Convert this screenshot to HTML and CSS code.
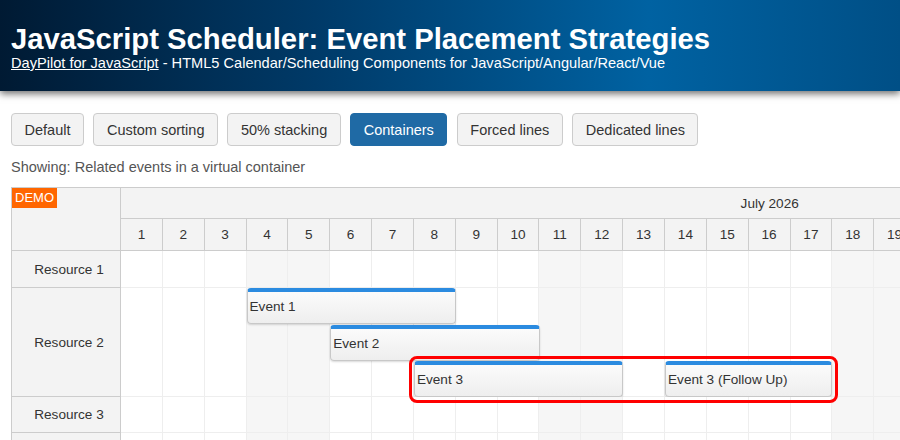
FILE: index.html
```html
<!DOCTYPE html>
<html>
<head>
<meta charset="utf-8">
<link rel="stylesheet" href="styles.css">
</head>
<body>
<div class="header">
  <h1 class="title">JavaScript Scheduler: Event Placement Strategies</h1>
  <div class="subtitle"><a class="link" href="#">DayPilot for JavaScript</a> - HTML5 Calendar/Scheduling Components for JavaScript/Angular/React/Vue</div>
</div>
<div class="main">
  <div class="toolbar">
    <button class="btn">Default</button>
    <button class="btn">Custom sorting</button>
    <button class="btn">50% stacking</button>
    <button class="btn active">Containers</button>
    <button class="btn">Forced lines</button>
    <button class="btn">Dedicated lines</button>
  </div>
  <div class="showing">Showing: Related events in a virtual container</div>
  <div class="scheduler">
    <div class="rowheaders">
      <div class="corner"><span class="demo">DEMO</span></div>
      <div class="rh rh1">Resource 1</div>
      <div class="rh rh2">Resource 2</div>
      <div class="rh rh3">Resource 3</div>
      <div class="rh rh4"></div>
    </div>
    <div class="timeline">
      <div class="month"><span class="month-label">July 2026</span></div>
      <div class="days">
        <div class="day">1</div><div class="day">2</div><div class="day">3</div><div class="day">4</div><div class="day">5</div><div class="day">6</div><div class="day">7</div><div class="day">8</div><div class="day">9</div><div class="day">10</div><div class="day">11</div><div class="day">12</div><div class="day">13</div><div class="day">14</div><div class="day">15</div><div class="day">16</div><div class="day">17</div><div class="day">18</div><div class="day">19</div><div class="day">20</div><div class="day">21</div><div class="day">22</div><div class="day">23</div><div class="day">24</div><div class="day">25</div><div class="day">26</div><div class="day">27</div><div class="day">28</div><div class="day">29</div><div class="day">30</div><div class="day">31</div>
      </div>
      <div class="row row1"></div>
      <div class="row row2">
        <div class="event" style="left:125.55px;width:209.25px;top:0px;"><span class="event-text">Event 1</span></div>
        <div class="event" style="left:209.25px;width:209.25px;top:37px;"><span class="event-text">Event 2</span></div>
        <div class="event" style="left:292.95px;width:209.25px;top:73px;"><span class="event-text">Event 3</span></div>
        <div class="event" style="left:544.05px;width:167.4px;top:73px;"><span class="event-text">Event 3 (Follow Up)</span></div>
        <div class="container-box" style="left:288px;width:429px;top:68px;"></div>
      </div>
      <div class="row row3"></div>
      <div class="row row4"></div>
    </div>
  </div>
</div>
</body>
</html>
```
FILE: styles.css
```css
html, body {
  margin: 0;
  padding: 0;
}
body {
  font-family: "Liberation Sans", Arial, sans-serif;
  color: #333;
  overflow: hidden;
  width: 900px;
  height: 440px;
  background: #fff;
}
.header {
  height: 91px;
  box-sizing: border-box;
  padding: 23px 11px 0 11px;
  background: linear-gradient(to right, #001a33 0%, #003a68 35%, #0062a2 72%, #004f86 100%);
  box-shadow: 0 3px 7px rgba(0, 0, 0, 0.55);
  color: #fff;
  position: relative;
  z-index: 2;
}
.title {
  margin: 0;
  font-size: 29.25px;
  line-height: 32px;
  font-weight: bold;
}
.subtitle {
  font-size: 14.6px;
  line-height: 17px;
  margin-top: 0;
}
.link {
  color: #fff;
  text-decoration: underline;
}
.main {
  padding: 0 11px;
}
.toolbar {
  display: flex;
  gap: 9.5px;
  margin-top: 22px;
}
.btn {
  font-family: "Liberation Sans", Arial, sans-serif;
  font-size: 14.5px;
  color: #333;
  height: 33px;
  padding: 0 12.5px;
  border: 1px solid #ccc;
  border-radius: 4px;
  background: #f3f3f3;
  cursor: pointer;
}
.btn.active {
  background: #1f6aa5;
  border-color: #1f6aa5;
  color: #fff;
}
.showing {
  margin-top: 12px;
  font-size: 14.5px;
  line-height: 18px;
  color: #555;
}
.scheduler {
  margin-top: 11px;
  display: flex;
  border-top: 1px solid #ccc;
  border-left: 1px solid #ccc;
  width: 1500px;
  font-size: 13.6px;
}
.rowheaders {
  width: 108px;
  flex: none;
  border-right: 1px solid #ccc;
  background: #f3f3f3;
}
.corner {
  height: 62px;
  border-bottom: 1px solid #ccc;
}
.demo {
  display: inline-block;
  background: #ff6600;
  color: #fff;
  font-size: 13px;
  line-height: 20px;
  padding: 0 3px;
}
.rh {
  display: flex;
  align-items: center;
  justify-content: center;
  padding-left: 6px;
  border-bottom: 1px solid #ccc;
}
.rh1 { height: 36px; }
.rh2 { height: 108px; }
.rh3 { height: 35px; }
.rh4 { height: 40px; }
.timeline {
  width: 1297.4px;
  flex: none;
}
.month {
  height: 30px;
  background: #f3f3f3;
  border-bottom: 1px solid #ccc;
  display: flex;
  align-items: center;
  justify-content: center;
}
.days {
  display: flex;
  height: 31px;
  border-bottom: 1px solid #ccc;
  background: #f3f3f3;
}
.day {
  width: 41.85px;
  flex: none;
  box-sizing: border-box;
  border-right: 1px solid #ccc;
  display: flex;
  align-items: center;
  justify-content: center;
}
.row {
  position: relative;
  border-bottom: 1px solid #eee;
  background-image:
    repeating-linear-gradient(to right, transparent 0, transparent 40.85px, #eee 40.85px, #eee 41.85px),
    repeating-linear-gradient(to right, #fff 0, #fff 125.55px, #f6f6f6 125.55px, #f6f6f6 209.25px, #fff 209.25px, #fff 292.95px);
}
.row1 { height: 36px; }
.row2 { height: 108px; }
.row3 { height: 35px; }
.row4 { height: 40px; }
.event {
  position: absolute;
  height: 36px;
  box-sizing: border-box;
  border: 1px solid #c8c8c8;
  border-top: 4px solid #2b8be0;
  border-radius: 4px;
  background: linear-gradient(to bottom, #fbfbfb 0%, #eeeeee 100%);
  box-shadow: 0 1px 2px rgba(0, 0, 0, 0.15);
  display: flex;
  align-items: center;
  padding-left: 2px;
  color: #333;
  white-space: nowrap;
  overflow: hidden;
}
.event-text {
  margin-top: -2px;
}
.container-box {
  position: absolute;
  z-index: 1;
  height: 47px;
  box-sizing: border-box;
  border: 3px solid #f00;
  border-radius: 8px;
  pointer-events: none;
}
```
